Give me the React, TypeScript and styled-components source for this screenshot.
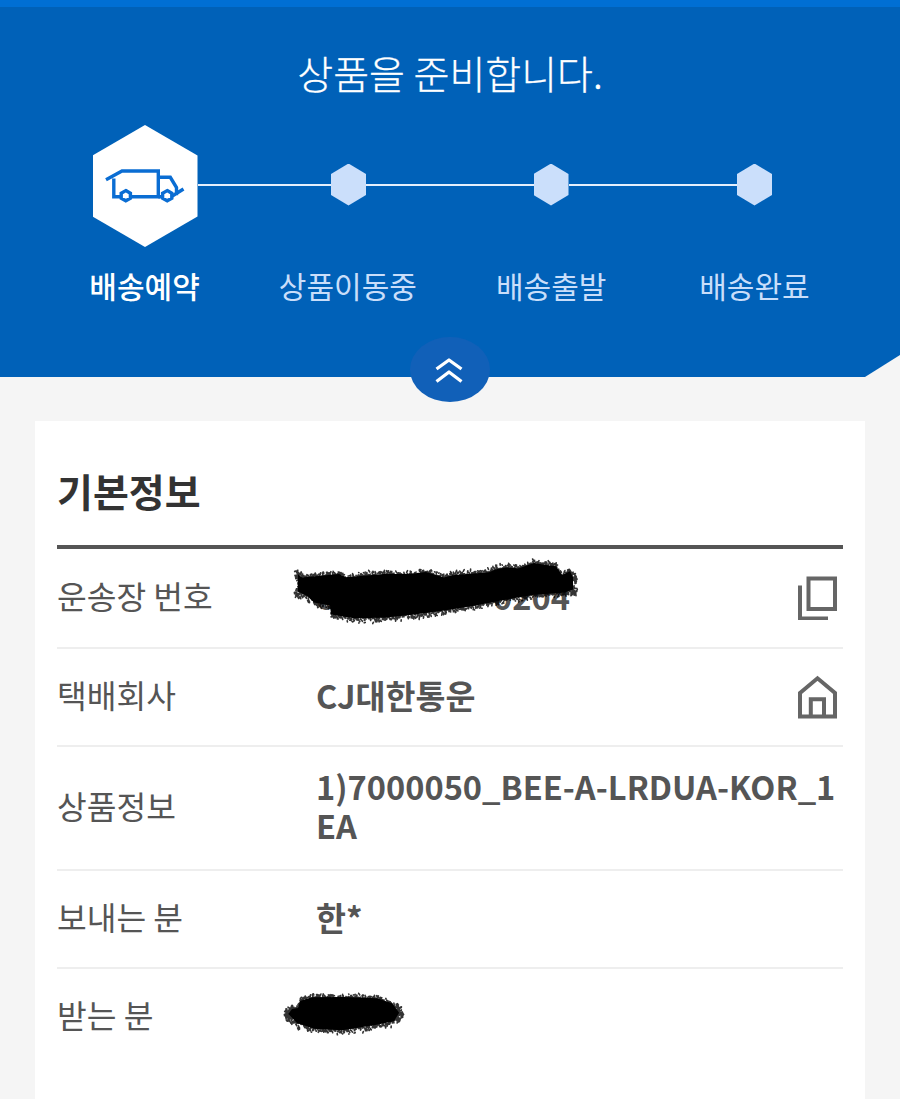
import React from "react";
import styled, { createGlobalStyle } from "styled-components";

const GlobalStyle = createGlobalStyle`
  * { box-sizing: border-box; }
  body {
    margin: 0;
    background: #f5f5f5;
    font-family: "Noto Sans CJK KR", "Noto Sans", sans-serif;
  }
`;

const Page = styled.main`
  width: 900px;
  height: 1099px;
  overflow: hidden;
  background: #f5f5f5;
`;

const Hero = styled.header`
  position: relative;
  height: 377px;
  border-top: 7px solid #006fd4;
  background: #0061b8;
  clip-path: polygon(0 0, 100% 0, 100% 355px, 865px 100%, 0 100%);
`;

const HeroTitle = styled.h1`
  margin: 0;
  padding-top: 35px;
  color: #fff;
  font-size: 39px;
  font-weight: 300;
  line-height: 60px;
  text-align: center;
  -webkit-text-stroke: 0.3px #fff;
`;

const Track = styled.div`
  display: grid;
  grid-template-columns: 105px 133.5px 35px 167.5px 35px 168.5px 35px;
  align-items: center;
  height: 122px;
  margin: 23px 0 0 92.5px;
`;

const Connector = styled.div`
  height: 2px;
  margin-top: -3px;
  background: #e4effc;
`;

const Hexagon = styled.div<{ $active?: boolean }>`
  display: flex;
  align-items: center;
  justify-content: center;
  height: ${(p) => (p.$active ? 122 : 42)}px;
  margin-top: ${(p) => (p.$active ? 0 : -3)}px;
  padding-bottom: ${(p) => (p.$active ? 2 : 0)}px;
  background: ${(p) => (p.$active ? "#fff" : "#cbdffb")};
  clip-path: polygon(50% 0, 100% 25%, 100% 75%, 50% 100%, 0 75%, 0 25%);
`;

const Labels = styled.div`
  display: grid;
  grid-template-columns: repeat(4, 203.3px);
  justify-content: center;
  margin: 15px 1px 0 0;
`;

const StepLabel = styled.span<{ $active?: boolean }>`
  color: ${(p) => (p.$active ? "#fff" : "#c9defa")};
  font-size: 30px;
  font-weight: ${(p) => (p.$active ? 500 : 400)};
  line-height: 46px;
  text-align: center;
`;

const HeroWrap = styled.div`
  position: relative;
`;

const CollapseButton = styled.button`
  position: absolute;
  left: 410px;
  top: 337px;
  display: flex;
  align-items: center;
  justify-content: center;
  width: 80px;
  height: 65px;
  padding: 0 2px 0 0;
  border: 0;
  border-radius: 50%;
  background: #1160b8;
`;

const Card = styled.section`
  width: 830px;
  height: 700px;
  margin: 44px auto 0;
  padding: 39px 22px 0;
  background: #fff;
`;

const CardTitle = styled.h2`
  margin: 0;
  height: 89px;
  border-bottom: 4px solid #555;
  color: #333;
  font-size: 39px;
  font-weight: 700;
  line-height: 60px;
`;

const Row = styled.div<{ $height: number }>`
  display: grid;
  grid-template-columns: 259px 1fr auto;
  align-items: center;
  height: ${(p) => p.$height}px;
  border-bottom: 2px solid #eee;
  &:last-child { border-bottom: 0; }
`;

const Label = styled.span`
  padding-bottom: 7px;
  color: #555;
  font-size: 32.3px;
  font-weight: 400;
  line-height: 40px;
`;

const Value = styled.strong`
  position: relative;
  min-width: 0;
  min-height: 45px;
  padding-bottom: 6px;
  color: #555;
  font-size: 32.6px;
  font-weight: 700;
  line-height: 39px;
  word-break: break-all;
`;

const NumberEnds = styled.span`
  display: flex;
  justify-content: space-between;
  width: 254px;
`;

const IconButton = styled.button`
  display: flex;
  padding: 0;
  margin-right: 6px;
  border: 0;
  background: none;
`;

const InkLayer = styled.svg<{ $left: number; $top: number }>`
  position: absolute;
  left: ${(p) => p.$left}px;
  top: ${(p) => p.$top}px;
  overflow: visible;
`;

type Point = [number, number];

const edgeAt = (edge: Point[], x: number) => {
  for (let i = 1; i < edge.length; i++) {
    const [x0, y0] = edge[i - 1];
    const [x1, y1] = edge[i];
    if (x <= x1) return y0 + ((x - x0) / (x1 - x0)) * (y1 - y0);
  }
  return edge[edge.length - 1][1];
};

interface InkProps {
  left: number;
  top: number;
  width: number;
  height: number;
  upper: Point[];
  lower: Point[];
}

/* A charcoal stroke: a solid core with short bristle marks along its rim. */
const Ink = ({ left, top, width, height, upper, lower }: InkProps) => {
  let seed = 71;
  const rand = () => {
    seed = (seed * 16807) % 2147483647;
    return seed / 2147483647;
  };
  let bristles = "";
  const mark = (x: number, y: number) => {
    const dx = (rand() - 0.5) * 2;
    const dy = (rand() - 0.5) * 4;
    bristles += `M${x.toFixed(1)} ${y.toFixed(1)}l${dx.toFixed(1)} ${dy.toFixed(1)}`;
  };
  const start = upper[0];
  const end = upper[upper.length - 1];
  for (let x = start[0]; x < end[0]; x += 0.9) {
    mark(x, edgeAt(upper, x) + 1 + rand() * 6);
    mark(x, edgeAt(upper, x) + 3 + rand() * 4);
    mark(x, edgeAt(lower, x) - 1 - rand() * 7);
    mark(x, edgeAt(lower, x) - 3 - rand() * 5);
  }
  for (let i = 0; i < 50; i++) {
    const x0 = start[0] + 1 + rand() * 6;
    mark(x0, edgeAt(upper, x0) + rand() * (edgeAt(lower, x0) - edgeAt(upper, x0)));
    const x1 = end[0] - 1 - rand() * 6;
    mark(x1, edgeAt(upper, x1) + rand() * (edgeAt(lower, x1) - edgeAt(upper, x1)));
  }
  const inset = (x: number) => Math.min(Math.max(x, start[0] + 3), end[0] - 4);
  const core = [
    ...upper.map(([x, y]) => [inset(x), y + 4 + rand()]),
    ...[...lower].reverse().map(([x, y]) => [inset(x), y - 5 - rand()]),
  ];
  return (
    <InkLayer $left={left} $top={top} width={width} height={height} aria-hidden="true">
      <polygon points={core.map((p) => p.join(",")).join(" ")} fill="#000" />
      <path d={bristles} fill="none" stroke="#000" strokeWidth="1.6" strokeLinecap="round" opacity="0.8" />
    </InkLayer>
  );
};

const TruckIcon = () => (
  <svg width="80" height="36" viewBox="0 0 80 36" fill="none" stroke="#0a6dd3" strokeWidth="3.4">
    <path d="M1 12.7L17 4H53.3V29.8H26M8.8 11.5V29.8H15.5" />
    <path d="M53.3 10.3H65.3L71.5 20.5V28.3M53.3 29.8H57M66.5 29.5L78.5 22" />
    <path d="M20.8 23.6L25.4 26.2V31.2L20.8 33.8L16.2 31.2V26.2ZM62.2 23.6L66.8 26.2V31.2L62.2 33.8L57.6 31.2V26.2Z" />
  </svg>
);

const CopyIcon = () => (
  <svg width="40" height="44" viewBox="0 0 40 44" fill="none" stroke="#666" strokeWidth="4">
    <path d="M11.5 2.5H38V33H11.5ZM3 9.5V42.5H31" />
  </svg>
);

const HomeIcon = () => (
  <svg width="40" height="44" viewBox="0 0 40 44" fill="none" stroke="#666" strokeWidth="4">
    <path d="M3 18L20.5 3.3L38 18V41.5H3ZM13.8 41V24.3H27V41" />
  </svg>
);

const ChevronsIcon = () => (
  <svg width="28" height="26" viewBox="0 0 28 26" fill="none" stroke="#fff" strokeWidth="3.3" strokeLinejoin="round">
    <path d="M1.5 12L14 3L26.5 12M1.5 24.5L14 15L26.5 24.5" />
  </svg>
);

const steps = ["배송예약", "상품이동중", "배송출발", "배송완료"];

export default function App() {
  return (
    <Page>
      <GlobalStyle />
      <HeroWrap>
        <Hero>
          <HeroTitle>상품을 준비합니다.</HeroTitle>
          <Track>
            <Hexagon $active><TruckIcon /></Hexagon>
            <Connector />
            <Hexagon />
            <Connector />
            <Hexagon />
            <Connector />
            <Hexagon />
          </Track>
          <Labels>
            {steps.map((s, i) => (
              <StepLabel key={s} $active={i === 0}>{s}</StepLabel>
            ))}
          </Labels>
        </Hero>
        <CollapseButton aria-label="접기"><ChevronsIcon /></CollapseButton>
      </HeroWrap>
      <Card>
        <CardTitle>기본정보</CardTitle>
        <Row $height={100}>
          <Label>운송장 번호</Label>
          <Value>
            <NumberEnds><span>6</span><span>0204</span></NumberEnds>
            <Ink
              left={-22} top={-17} width={288} height={70}
              upper={[[1, 11], [8, 14], [45, 11], [52, 14], [90, 10], [115, 11], [132, 9], [150, 14], [158, 12], [195, 9], [202, 6], [212, 4], [225, 5], [240, 0], [250, 1], [262, 3], [268, 12], [276, 8], [283, 14]]}
              lower={[[1, 38], [14, 43], [20, 49], [36, 52], [37, 61], [60, 65], [90, 64], [120, 61], [150, 57], [180, 52], [210, 46], [240, 41], [270, 39], [283, 36]]}
            />
          </Value>
          <IconButton aria-label="복사"><CopyIcon /></IconButton>
        </Row>
        <Row $height={98}>
          <Label>택배회사</Label>
          <Value>CJ대한통운</Value>
          <IconButton aria-label="홈페이지"><HomeIcon /></IconButton>
        </Row>
        <Row $height={124}>
          <Label>상품정보</Label>
          <Value>1)7000050_BEE-A-LRDUA-KOR_1EA</Value>
        </Row>
        <Row $height={98}>
          <Label>보내는 분</Label>
          <Value>한*</Value>
        </Row>
        <Row $height={97}>
          <Label>받는 분</Label>
          <Value>
            <Ink
              left={-32} top={-3} width={122} height={46}
              upper={[[1, 18], [8, 13], [14, 12], [16, 4], [28, 1], [60, 1], [93, 2], [108, 7], [119, 16]]}
              lower={[[1, 27], [13, 37], [30, 42], [58, 44], [90, 39], [110, 35], [119, 26]]}
            />
          </Value>
        </Row>
      </Card>
    </Page>
  );
}
